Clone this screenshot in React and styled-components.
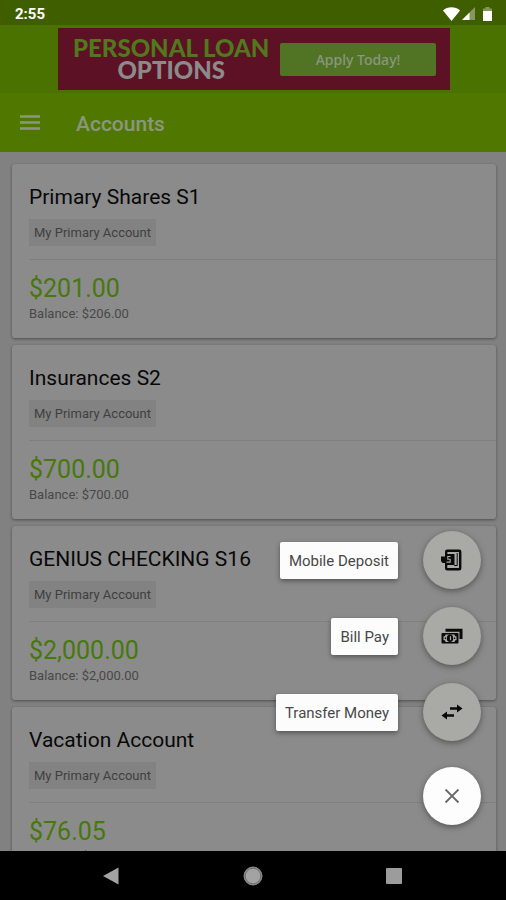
import React from "react";
import styled, { createGlobalStyle } from "styled-components";

const GlobalStyle = createGlobalStyle`
  * {
    box-sizing: border-box;
  }
  body {
    margin: 0;
    background: #000;
    font-family: Roboto, sans-serif;
  }
  button {
    font-family: inherit;
    border: 0;
    padding: 0;
    cursor: pointer;
  }
`;

const Screen = styled.div`
  position: relative;
  display: flex;
  flex-direction: column;
  height: 100vh;
  overflow: hidden;
`;

const StatusBar = styled.div`
  flex: none;
  display: flex;
  align-items: center;
  justify-content: space-between;
  height: 25px;
  padding: 2px 14px 0 15px;
  background: #3e5e00;
  color: #fff;
  font-size: 15px;
  font-weight: 700;
`;

const StatusIcons = styled.div`
  display: flex;
  align-items: center;
  gap: 2px;
  svg {
    display: block;
  }
  svg:last-child {
    margin-left: 6px;
  }
`;

const Header = styled.header`
  flex: none;
  background: #507800;
`;

const BannerArea = styled.div`
  display: flex;
  justify-content: center;
  padding: 3px 56px 3px 58px;
  background: #4a7200;
`;

const Banner = styled.div`
  flex: 1;
  display: flex;
  align-items: center;
  justify-content: space-between;
  height: 62px;
  padding: 0 14px 0 15px;
  background: #5c1224;
`;

const BannerText = styled.div`
  display: flex;
  flex-direction: column;
  align-items: center;
  font-family: Lato, sans-serif;
  font-size: 24px;
  font-weight: 900;
  line-height: 22px;
  color: #8b8b8b;
  white-space: nowrap;
`;

const BannerAccent = styled.span`
  color: #51781c;
`;

const ApplyButton = styled.button`
  width: 156px;
  height: 33px;
  border-radius: 2px;
  background: #507324;
  color: #8b9680;
  && {
    font-family: "Noto Sans", sans-serif;
  }
  font-size: 14px;
  font-weight: 500;
`;

const Toolbar = styled.div`
  display: flex;
  align-items: center;
  gap: 36px;
  height: 59px;
  padding: 0 20px;
`;

const MenuButton = styled.button`
  display: flex;
  background: none;
  color: #8b9680;
`;

const Title = styled.h1`
  margin: 0;
  padding-top: 2px;
  font-size: 21px;
  font-weight: 500;
  color: #8b9680;
`;

const AccountList = styled.main`
  flex: 1;
  min-height: 0;
  display: flex;
  flex-direction: column;
  gap: 7px;
  padding: 12px 10px 0 12px;
  overflow: hidden;
  background: #818181;
`;

const Card = styled.section`
  flex: none;
  height: 174px;
  padding: 20px 0 0 17px;
  border-radius: 3px;
  background: #8b8b8b;
  box-shadow: 0 1px 3px rgba(0, 0, 0, 0.4);
`;

const AccountName = styled.h2`
  margin: 0 0 9px;
  font-size: 21px;
  font-weight: 400;
  line-height: 26px;
  color: #080808;
`;

const Chip = styled.span`
  display: block;
  width: fit-content;
  padding: 1px 5px 0;
  background: #828282;
  color: #3f3f3f;
  font-size: 13px;
  line-height: 26px;
`;

const Amounts = styled.div`
  margin-top: 13px;
  padding-top: 14px;
  border-top: 1px solid #7f7f7f;
`;

const Available = styled.div`
  font-size: 25px;
  line-height: 30px;
  color: #47780c;
`;

const Balance = styled.div`
  font-size: 13px;
  line-height: 20px;
  color: #484848;
`;

const NavBar = styled.nav`
  flex: none;
  display: flex;
  justify-content: center;
  gap: 121px;
  height: 49px;
  background: #000;
`;

const NavButton = styled.button`
  display: flex;
  align-items: center;
  background: none;
`;

const ActionMenu = styled.div`
  position: absolute;
  right: 25px;
  bottom: 75px;
  display: flex;
  flex-direction: column;
  align-items: flex-end;
  gap: 18px;
`;

const ActionRow = styled.button`
  display: flex;
  align-items: center;
  gap: 25px;
  background: none;
`;

const ActionLabel = styled.span`
  padding: 1px 9px 0;
  border-radius: 2px;
  background: #fcfcfc;
  color: #484848;
  font-size: 15px;
  line-height: 36px;
  box-shadow: 0 2px 5px rgba(0, 0, 0, 0.4);
`;

const Circle = styled.span`
  display: flex;
  align-items: center;
  justify-content: center;
  width: 58px;
  height: 58px;
  margin-top: ${props => (props.$main ? "8px" : "0")};
  border-radius: 50%;
  background: ${props => (props.$main ? "#fdfdfd" : "#a9a9a5")};
  box-shadow: 0 2px 6px rgba(0, 0, 0, 0.4);
`;

const accounts = [
  { name: "Primary Shares S1", available: "$201.00", balance: "$206.00" },
  { name: "Insurances S2", available: "$700.00", balance: "$700.00" },
  { name: "GENIUS CHECKING S16", available: "$2,000.00", balance: "$2,000.00" },
  { name: "Vacation Account", available: "$76.05", balance: "$76.05" }
];

const DepositIcon = () => (
  <svg width="22" height="22" viewBox="0 0 22 22">
    <rect x="5.2" y="1.7" width="14" height="18.6" rx="1" fill="none" stroke="#0a0a0a" strokeWidth="2.4" />
    <path d="M16.2 4v12.500h-3" fill="none" stroke="#0a0a0a" strokeWidth="1" />
    <path d="M4 5h9.500v11H4v-2H1.500L0 12V7.500h4z" fill="#0a0a0a" />
    <path d="M9.500 7.500H6.800v2.700h2.400v2.900H5.500" fill="none" stroke="#a9a9a5" strokeWidth="1.1" />
    <path d="M6.500 17.800h4.500M13.500 17.800h4" stroke="#a9a9a5" strokeWidth="1.4" />
  </svg>
);

const BillIcon = () => (
  <svg width="22" height="16" viewBox="0 0 22 16">
    <path d="M4.5 2.2H20V11" fill="none" stroke="#0a0a0a" strokeWidth="3" />
    <rect x="0.5" y="5" width="17" height="10.500" rx="1" fill="#0a0a0a" />
    <path d="M4.5 6.500h9a2 2 0 0 0 2 2v3.500a2 2 0 0 0-2 2h-9a2 2 0 0 0-2-2V8.500a2 2 0 0 0 2-2z" fill="#a9a9a5" />
    <ellipse cx="9" cy="10.2" rx="3.2" ry="3.8" fill="#0a0a0a" />
    <path d="M9.500 8.200v4" stroke="#a9a9a5" strokeWidth="1.200" />
    <path d="M3.800 10.200h1.200M13 10.200h1.200" stroke="#0a0a0a" strokeWidth="1.400" />
  </svg>
);

const TransferIcon = () => (
  <svg width="22" height="16" viewBox="0 0 22 16">
    <path d="M9 3.300h7V.500L21.500 4.500 16 8.500V5.700H9z" fill="#0a0a0a" />
    <path d="M13 10.300H6V7.500L.500 11.500l5.500 4v-2.800h7z" fill="#0a0a0a" />
  </svg>
);

const actions = [
  { label: "Mobile Deposit", Icon: DepositIcon },
  { label: "Bill Pay", Icon: BillIcon },
  { label: "Transfer Money", Icon: TransferIcon }
];

const AccountCard = ({ account }) => (
  <Card>
    <AccountName>{account.name}</AccountName>
    <Chip>My Primary Account</Chip>
    <Amounts>
      <Available>{account.available}</Available>
      <Balance>Balance: {account.balance}</Balance>
    </Amounts>
  </Card>
);

const App = () => (
  <Screen>
    <GlobalStyle />
    <StatusBar>
      <span>2:55</span>
      <StatusIcons>
        <svg width="17" height="14" viewBox="0 0 17 14">
          <path d="M0 3.500C4.500-.8 12.500-.8 17 3.500L8.500 14z" fill="#fff" />
        </svg>
        <svg width="13" height="13" viewBox="0 0 13 13">
          <path d="M13 0v13H0z" fill="#839861" />
          <path d="M7.500 5.500V13H0z" fill="#fff" />
        </svg>
        <svg width="9" height="14" viewBox="0 0 9 14">
          <path d="M2.500 0h4v1.500H9V4H0V1.500h2.500z" fill="#839851" />
          <path d="M0 4h9v10H0z" fill="#fff" />
        </svg>
      </StatusIcons>
    </StatusBar>
    <Header>
      <BannerArea>
        <Banner>
          <BannerText>
            <BannerAccent>PERSONAL LOAN</BannerAccent>
            <span>OPTIONS</span>
          </BannerText>
          <ApplyButton>Apply Today!</ApplyButton>
        </Banner>
      </BannerArea>
      <Toolbar>
        <MenuButton aria-label="Menu">
          <svg width="20" height="15" viewBox="0 0 20 15">
            <path d="M0 1.500h20M0 7.500h20M0 13.500h20" stroke="currentColor" strokeWidth="2.400" />
          </svg>
        </MenuButton>
        <Title>Accounts</Title>
      </Toolbar>
    </Header>
    <AccountList>
      {accounts.map(account => (
        <AccountCard key={account.name} account={account} />
      ))}
    </AccountList>
    <NavBar>
      <NavButton aria-label="Back">
        <svg width="20" height="18" viewBox="0 0 20 18">
          <path d="M16.500 .5v17L1 9z" fill="#a3a3a3" />
        </svg>
      </NavButton>
      <NavButton aria-label="Home">
        <svg width="20" height="20" viewBox="0 0 20 20">
          <circle cx="10" cy="10" r="9" fill="#a3a3a3" stroke="#8a8a8a" />
          <circle cx="10" cy="10" r="7.800" fill="none" stroke="#5c5c5c" strokeWidth=".8" />
        </svg>
      </NavButton>
      <NavButton aria-label="Recent apps">
        <svg width="20" height="16" viewBox="0 0 20 16">
          <rect x="2" width="16" height="16" rx="1" fill="#9c9c9c" />
        </svg>
      </NavButton>
    </NavBar>
    <ActionMenu>
      {actions.map(({ label, Icon }) => (
        <ActionRow key={label}>
          <ActionLabel>{label}</ActionLabel>
          <Circle>
            <Icon />
          </Circle>
        </ActionRow>
      ))}
      <ActionRow aria-label="Close menu">
        <Circle $main>
          <svg width="16" height="16" viewBox="0 0 16 16">
            <path d="M1.500 1.500l13 13M14.500 1.500l-13 13" stroke="#6a6a6a" strokeWidth="1.800" />
          </svg>
        </Circle>
      </ActionRow>
    </ActionMenu>
  </Screen>
);

export default App;
